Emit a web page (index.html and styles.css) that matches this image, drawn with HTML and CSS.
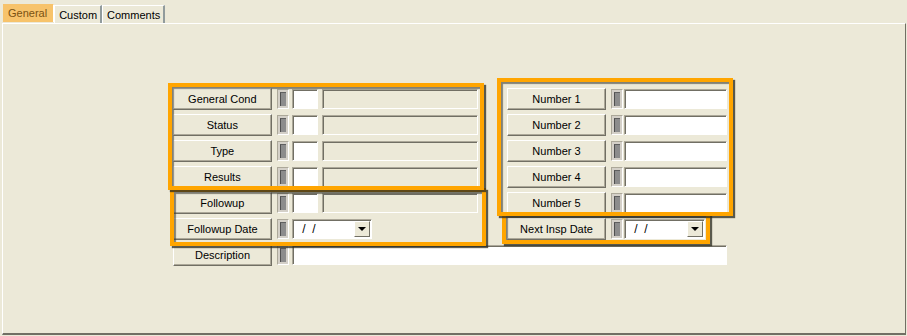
FILE: index.html
```html
<!DOCTYPE html>
<html>
<head>
    <link rel="stylesheet" href="styles.css">
</head>
<body>

<!-- tab strip -->
<div class="tabs">
    <span class="tab active">General</span><span class="tab">Custom</span><span class="tab">Comments</span>
</div>

<div class="panel">
    <div class="form">
        <div class="cols">
            <!-- left column -->
            <div class="col left">
                <div class="row">
                    <div class="label">General Cond</div><div class="ind"><span></span></div><div class="code"></div><div class="desc"></div>
                </div>
                <div class="row">
                    <div class="label">Status</div><div class="ind"><span></span></div><div class="code"></div><div class="desc"></div>
                </div>
                <div class="row">
                    <div class="label">Type</div><div class="ind"><span></span></div><div class="code"></div><div class="desc"></div>
                </div>
                <div class="row">
                    <div class="label">Results</div><div class="ind"><span></span></div><div class="code"></div><div class="desc"></div>
                </div>
                <div class="row">
                    <div class="label">Followup</div><div class="ind"><span></span></div><div class="code"></div><div class="desc"></div>
                </div>
                <div class="row">
                    <div class="label">Followup Date</div><div class="ind"><span></span></div>
                    <div class="combo date-left"><span class="val"> /  /</span><span class="drop"></span></div>
                </div>
            </div>
            <!-- right column -->
            <div class="col right">
                <div class="row">
                    <div class="label">Number 1</div><div class="ind"><span></span></div><div class="num"></div>
                </div>
                <div class="row">
                    <div class="label">Number 2</div><div class="ind"><span></span></div><div class="num"></div>
                </div>
                <div class="row">
                    <div class="label">Number 3</div><div class="ind"><span></span></div><div class="num"></div>
                </div>
                <div class="row">
                    <div class="label">Number 4</div><div class="ind"><span></span></div><div class="num"></div>
                </div>
                <div class="row">
                    <div class="label">Number 5</div><div class="ind"><span></span></div><div class="num"></div>
                </div>
                <div class="row">
                    <div class="label">Next Insp Date</div><div class="ind"><span></span></div>
                    <div class="combo date-right"><span class="val"> /  /</span><span class="drop"></span></div>
                </div>
            </div>
        </div>
        <div class="row">
            <div class="label">Description</div><div class="ind"><span></span></div><div class="longtext"></div>
        </div>
    </div>

    <!-- highlight boxes drawn over the form -->
    <div class="mark mark-b"></div>
    <div class="mark mark-a"></div>
    <div class="mark mark-d"></div>
    <div class="mark mark-c"></div>
</div>

</body>
</html>
```

FILE: styles.css
```css
body {
    margin: 0;
    background-color: #ECE9D8;
    font-family: "Liberation Sans", Arial, sans-serif;
    font-size: 11px;
    color: #000;
}

.tabs {
    height: 23px;
    padding-left: 3px;
    display: flex;
    align-items: flex-end;
    position: relative;
    z-index: 2;
}
.tab {
    box-sizing: border-box;
    height: 18px;
    padding: 1px 3px 0 4px;
    line-height: 16px;
    border-top: 1px solid #fff;
    border-left: 1px solid #fff;
    border-right: 2px solid #919B9C;
    background-color: #ECE9D8;
}
.tab.active {
    height: 18px;
    margin-bottom: 1px;
    padding: 0 6px 0 4px;
    line-height: 17px;
    background-color: #F7C36B;
    color: #7A5212;
    border-top: 1px solid #F7C36B;
    border-left: 1px solid #F7C36B;
    border-right: 1px solid #fff;
}

.panel {
    position: relative;
    box-sizing: border-box;
    margin-left: 2px;
    width: 904px;
    height: 312px;
    border-top: 1px solid #fff;
    border-left: 1px solid #fff;
    border-right: 1px solid #716F64;
    border-bottom: 2px solid #716F64;
}

.form {
    padding: 64px 0 0 170px;
}
.cols {
    display: flex;
}
.col.left {
    width: 305px;
}
.col.right {
    margin-left: 29px;
}

.row {
    display: flex;
    align-items: center;
    height: 22px;
    margin-bottom: 4px;
}

.label {
    box-sizing: border-box;
    width: 99px;
    height: 22px;
    line-height: 21px;
    text-align: center;
    background-color: #ECE9D8;
    border: 1px solid;
    border-color: #fff #716F64 #716F64 #fff;
    box-shadow: inset -1px -1px #ACA899;
}

.ind {
    box-sizing: border-box;
    width: 12px;
    height: 20px;
    margin-left: 5px;
    padding: 2px 2px;
    background-color: #D4D0C8;
    border: 1px solid;
    border-color: #ACA899 #fff #fff #ACA899;
}
.ind span {
    display: block;
    height: 100%;
    background-color: #8C8C8C;
    border-left: 1px solid #505050;
    border-top: 1px solid #606060;
    box-sizing: border-box;
}

.code, .desc, .num, .longtext, .combo {
    box-sizing: border-box;
    height: 20px;
    border: 1px solid;
    border-color: #ACA899 #fff #fff #ACA899;
    box-shadow: inset 1px 1px #716F64;
    background-color: #fff;
}
.code {
    width: 26px;
    margin-left: 3px;
}
.desc {
    width: 157px;
    margin-left: 4px;
    background-color: #ECE9D8;
}
.num {
    width: 103px;
    margin-left: 1px;
}
.longtext {
    width: 435px;
    margin-left: 3px;
}

.combo {
    display: flex;
    align-items: center;
    justify-content: space-between;
    padding: 1px 1px 1px 6px;
}
.date-left {
    width: 80px;
    margin-left: 3px;
}
.date-right {
    width: 81px;
    margin-left: 1px;
}
.combo .val {
    white-space: pre;
    font-size: 12px;
}
.combo .drop {
    position: relative;
    box-sizing: border-box;
    width: 16px;
    height: 16px;
    background-color: #ECE9D8;
    border: 1px solid;
    border-color: #fff #716F64 #716F64 #fff;
}
.combo .drop::after {
    content: "";
    position: absolute;
    left: 3px;
    top: 5px;
    border-left: 4px solid transparent;
    border-right: 4px solid transparent;
    border-top: 4px solid #000;
}

.mark {
    position: absolute;
    box-sizing: border-box;
    border: 4px solid #FFA500;
    box-shadow: 2px 2px 1px rgba(40, 40, 30, 0.75), inset 2px 2px 1px rgba(60, 60, 50, 0.6);
}
.mark-a {
    left: 165px;
    top: 59px;
    width: 316px;
    height: 107px;
}
.mark-b {
    left: 167px;
    top: 164px;
    width: 316px;
    height: 58px;
}
.mark-c {
    left: 494px;
    top: 54px;
    width: 236px;
    height: 138px;
}
.mark-d {
    left: 499px;
    top: 188px;
    width: 208px;
    height: 32px;
}
```
